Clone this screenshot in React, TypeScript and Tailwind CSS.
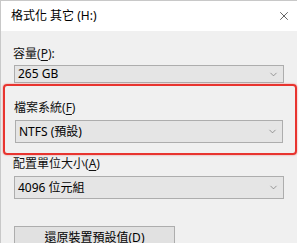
import { ChevronDown, X } from 'lucide-react'

const font = { fontFamily: '"Noto Sans", "Noto Sans CJK TC", sans-serif' }

function Combo({ value, h = 'h-[23px]' }: { value: string; h?: string }) {
  return (
    <div
      className={`mx-[13px] flex ${h} items-center justify-between border border-[#adadad] bg-[#e5e5e5] pl-[3px] pr-[4px] text-[12px] leading-none text-black`}
    >
      <span>{value}</span>
      <ChevronDown size={11} strokeWidth={1.5} className="text-[#707070]" />
    </div>
  )
}

function Label({ text, hot, tail = '' }: { text: string; hot: string; tail?: string }) {
  return (
    <div className="px-[12px] text-[12px] leading-[16px] text-[#111]">
      {text}(<span className="underline underline-offset-2">{hot}</span>){tail}
    </div>
  )
}

export default function App() {
  return (
    <div className="h-[243px] w-[300px] overflow-hidden bg-white" style={font}>
      <div className="h-[260px] w-[297px] border-l border-t border-[#c8c8c8] bg-[#f0f0f0]">
        <div className="flex h-[30px] items-center justify-between bg-white pl-[10px] pr-[6px]">
          <span className="text-[12px] text-black">格式化 其它 (H:)</span>
          <X size={14} strokeWidth={1.2} className="text-[#222]" />
        </div>

        <div className="flex flex-col">
          <div className="mt-[15px]">
            <Label text="容量" hot="P" tail=":" />
          </div>
          <div className="mt-[3px]">
            <Combo value="265 GB" h="h-[18px]" />
          </div>

          <div className="ml-[2px] mt-[1px] w-[294px] rounded-[4px] border-[2px] border-[#e8342f] pb-[10px] pt-[14px] shadow-[0_0_2px_rgba(232,52,47,0.6)]">
            <div className="-ml-[3px]">
              <Label text="檔案系統" hot="F" />
            </div>
            <div className="-ml-[3px] mt-[4px] w-[294px]">
              <Combo value="NTFS (預設)" />
            </div>
          </div>

          <div className="mt-[1px]">
            <Label text="配置單位大小" hot="A" />
          </div>
          <div className="mt-[4px]">
            <Combo value="4096 位元組" />
          </div>

          <button
            type="button"
            className="ml-[13px] mt-[27px] h-[23px] w-[161px] border border-[#adadad] bg-[#e1e1e1] text-[12px] leading-none text-black"
          >
            還原裝置預設值(<span className="underline underline-offset-2">D</span>)
          </button>
        </div>
      </div>
    </div>
  )
}
